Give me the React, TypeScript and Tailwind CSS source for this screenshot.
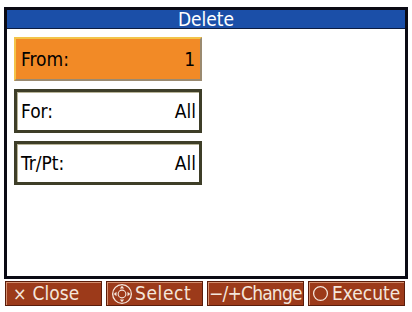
import React from "react";

const font = { fontFamily: '"DejaVu Sans Condensed", "DejaVu Sans", sans-serif', fontStretch: "condensed" as const };

function Row({ label, value, active }: { label: string; value: string; active?: boolean }) {
  return (
    <div
      className={
        active
          ? "h-[44px] w-[188px] flex items-center justify-between pl-[5px] pr-[5px] bg-[#f28a26] border-2 border-t-[#f3c44a] border-l-[#f3c44a] border-b-[#9a8a70] border-r-[#9a8a70]"
          : "h-[44px] w-[188px] flex items-center justify-between pl-[4px] pr-[3px] bg-white border-[3px] border-[#3e3e28] shadow-[inset_1px_1px_0_#b8b498]"
      }
    >
      <span className="text-[19px] leading-none text-black">{label}</span>
      <span className="text-[19px] leading-none text-black">{value}</span>
    </div>
  );
}

function Btn({ children, pad }: { children: React.ReactNode; pad: string }) {
  return (
    <div className={`h-[25px] flex items-center justify-start bg-[#9c3a1a] border border-[#5a1c0a] shadow-[inset_1px_1px_0_#d49070] text-[#f4e6dc] text-[19px] leading-none overflow-hidden whitespace-nowrap ${pad}`}>
      {children}
    </div>
  );
}

export default function App() {
  return (
    <div className="w-[412px] h-[312px] bg-white relative overflow-hidden" style={font}>
      <div className="ml-[4px] mt-[7px] w-[404px] h-[272px] border-[3px] border-[#0a0a14] flex flex-col">
        <div className="h-[19px] bg-[#1b4fa8] border-b border-[#0c1c40] flex items-center justify-center text-white text-[19px] leading-none">
          <span>Delete</span>
        </div>
        <div className="flex-1 bg-white pl-[7px] pt-[8px] flex flex-col gap-[8px]">
          <Row label="From:" value="1" active />
          <Row label="For:" value="All" />
          <Row label="Tr/Pt:" value="All" />
        </div>
      </div>
      <div className="mt-[2px] ml-[5px] w-[400px] grid grid-cols-4 gap-[4px]">
        <Btn pad="pl-[7px]">
          <span className="text-[18px] font-light mr-[6px]">×</span>
          <span>Close</span>
        </Btn>
        <Btn pad="pl-[4px]">
          <svg width="22" height="22" viewBox="0 0 20 20" fill="none" className="mr-[2px]">
            <circle cx="10" cy="10" r="8.5" stroke="#f4e6dc" strokeWidth="1.2" />
            <circle cx="10" cy="10" r="3.5" stroke="#f4e6dc" strokeWidth="1" />
            <path d="M10 2.5 L8 5 L12 5 Z M10 17.5 L8 15 L12 15 Z M2.5 10 L5 8 L5 12 Z M17.5 10 L15 8 L15 12 Z" fill="#f4e6dc" />
          </svg>
          <span className="tracking-[0.6px]">Select</span>
        </Btn>
        <Btn pad="pl-[1px]">
          <span className="tracking-[-0.8px]">−/+Change</span>
        </Btn>
        <Btn pad="pl-[3px]">
          <svg width="17" height="17" viewBox="0 0 16 16" fill="none" className="mr-[3px]">
            <circle cx="8" cy="8" r="6.5" stroke="#f4e6dc" strokeWidth="1.2" />
          </svg>
          <span>Execute</span>
        </Btn>
      </div>
    </div>
  );
}
